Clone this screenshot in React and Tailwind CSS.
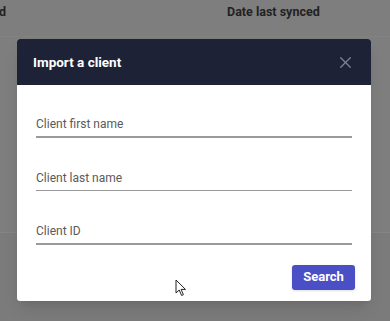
import React from 'react';
import { X } from 'lucide-react';

// Campo de texto con línea inferior
const Field = ({ label, className }) => (
  <div className={`flex flex-col ${className}`}>
    <span className="text-[12px] leading-4 text-[#5a5a5a]">{label}</span>
    <div className="mt-[4px] h-[1.5px] bg-[#9a9a9a]" />
  </div>
);

export default function App() {
  return (
    <div className="relative w-[390px] h-[321px] overflow-hidden bg-[#7b7b7b] font-['Roboto',sans-serif]">
      {/* Página de fondo (oscurecida por el overlay) */}
      <div className="flex flex-col h-[233px] bg-[#7e7e7e] border-b border-[#858585]">
        <div className="flex items-center h-[24px] text-[12.5px] font-bold text-[#222]">
          <span className="-ml-[1px]">d</span>
          <span className="ml-[221px]">Date last synced</span>
        </div>
        <div className="mt-[12px] h-px bg-[#828282]" />
      </div>

      {/* Modal */}
      <div className="absolute left-[17px] top-[39px] w-[354px] h-[262px] rounded-[3px] bg-white shadow-lg overflow-hidden flex flex-col">
        <div className="h-[46px] bg-[#1e2236] flex items-center justify-between pl-[16px] pr-[16px]">
          <h2 className="text-[13.5px] font-bold text-white">Import a client</h2>
          <X className="w-[19px] h-[19px] text-[#7f8391]" strokeWidth={1.6} />
        </div>
        <div className="flex flex-col px-[19px] pt-[31px]">
          <Field label="Client first name" />
          <Field label="Client last name" className="mt-[32px]" />
          <Field label="Client ID" className="mt-[32px]" />
          <div className="flex justify-end mt-[20px]">
            <button className="w-[63px] h-[25px] rounded-[3px] bg-[#4a4fc6] text-white text-[13px] font-bold shadow -mr-[3px]">
              Search
            </button>
          </div>
        </div>
      </div>

      {/* Cursor del ratón */}
      <svg className="absolute left-[175px] top-[279px]" width="12" height="18" viewBox="0 0 12 18">
        <path d="M1 1 L1 14 L4.2 11 L6.6 16.5 L8.4 15.7 L6.1 10.4 L10.5 10.4 Z" fill="white" stroke="#222" strokeWidth="1" strokeLinejoin="round" />
      </svg>
    </div>
  );
}
